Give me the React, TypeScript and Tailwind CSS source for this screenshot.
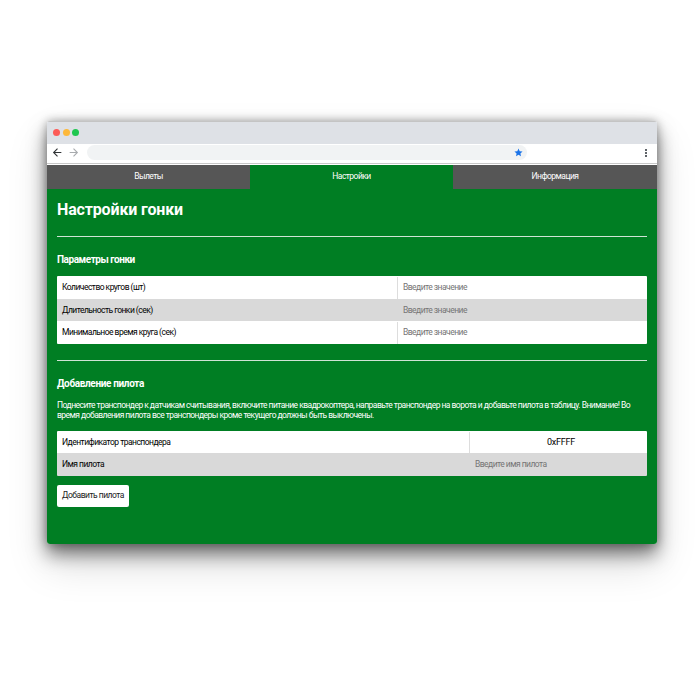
const font = { fontFamily: 'Roboto, "Liberation Sans", sans-serif' };

function Row({ label, value, gray, split, center }: { label: string; value: string; gray?: boolean; split: string; center?: boolean }) {
  return (
    <div className={`flex h-[22.5px] items-center pt-px text-[8.5px] tracking-[-0.53px] ${gray ? 'bg-[#d9d9d9]' : 'bg-white'}`}>
      <div className={`${split} pl-[5px] text-black`}>{label}</div>
      <div className={`flex h-full flex-1 items-center border-l pl-[5px] ${gray ? 'border-transparent' : 'border-[#dddddd]'} ${center ? 'justify-center pl-0 text-[9px] tracking-[-0.2px] text-black' : 'text-[#757575]'}`}>
        {value}
      </div>
    </div>
  );
}

export default function App() {
  return (
    <div className="h-[700px] w-[700px] overflow-hidden bg-white pl-[47px] pt-[121px] antialiased" style={font}>
      <div className="h-[423px] w-[610px] overflow-hidden rounded-[3px] shadow-[0_10px_18px_rgba(0,0,0,0.5),0_0_10px_rgba(0,0,0,0.3),0_20px_40px_rgba(0,0,0,0.15)]">
        <div className="flex h-[22.5px] items-center gap-[2.5px] border-t border-[#c4c4c4] bg-[#dee1e6] pl-[6px]">
          <span className="h-[7px] w-[7px] rounded-full bg-[#fc5b57]" />
          <span className="h-[7px] w-[7px] rounded-full bg-[#fdb83a]" />
          <span className="h-[7px] w-[7px] rounded-full bg-[#1fc750]" />
        </div>
        <div className="flex h-[20px] items-center border-b border-[#c8c8c8] bg-white pb-px">
          <svg width="11" height="11" viewBox="0 0 10 10" fill="none" stroke="#2f3235" strokeWidth="1" className="ml-[5px]">
            <path d="M8.5 5H1.5M5 1.5L1.5 5L5 8.5" />
          </svg>
          <svg width="11" height="11" viewBox="0 0 10 10" fill="none" stroke="#a8abae" strokeWidth="1" className="ml-[5px]">
            <path d="M1.5 5H8.5M5 1.5L8.5 5L5 8.5" />
          </svg>
          <div className="ml-[8px] flex h-[15px] w-[440px] items-center justify-end rounded-full bg-[#f1f3f4] pr-[4px]">
            <svg width="9" height="9" viewBox="0 0 24 24" fill="#1a73e8">
              <path d="M12 1.5l3.2 7 7.6.8-5.7 5.1 1.6 7.5L12 18l-6.7 3.9 1.6-7.5L1.2 9.3l7.6-.8z" />
            </svg>
          </div>
          <div className="ml-auto mr-[10px] flex flex-col gap-[1px]">
            <span className="h-[2px] w-[2px] bg-[#5f6368]" />
            <span className="h-[2px] w-[2px] bg-[#5f6368]" />
            <span className="h-[2px] w-[2px] bg-[#5f6368]" />
          </div>
        </div>
        <div className="flex h-[25.5px] pt-px text-[8.5px] tracking-[-0.55px] text-white">
          <div className="flex w-[203px] items-center justify-center bg-[#565656]">Вылеты</div>
          <div className="flex w-[203px] items-center justify-center bg-[#007e23]">Настройки</div>
          <div className="flex flex-1 items-center justify-center bg-[#565656]">Информация</div>
        </div>
        <div className="h-[355px] bg-[#007e23] px-[10px] text-white">
          <h1 className="pt-[10px] text-[16px] font-bold leading-[22px] tracking-[-0.15px]">Настройки гонки</h1>
          <div className="mt-[15px] h-px bg-[#cfe3d4]" />
          <h2 className="mt-[17px] text-[10px] font-bold leading-[12px] tracking-[-0.45px]">Параметры гонки</h2>
          <div className="mt-[10px] overflow-hidden rounded-[1px]">
            <Row label="Количество кругов (шт)" value="Введите значение" split="w-[340px]" />
            <Row label="Длительность гонки (сек)" value="Введите значение" split="w-[340px]" gray />
            <Row label="Минимальное время круга (сек)" value="Введите значение" split="w-[340px]" />
          </div>
          <div className="mt-[16px] h-px bg-[#cfe3d4]" />
          <h2 className="mt-[17px] text-[10px] font-bold leading-[12px] tracking-[-0.35px]">Добавление пилота</h2>
          <p className="mt-[10px] text-[8.5px] leading-[10.5px] tracking-[-0.53px]">
            Поднесите транспондер к датчикам считывания, включите питание квадрокоптера, направьте транспондер на ворота и добавьте пилота в таблицу. Внимание! Во время добавления пилота все транспондеры кроме текущего должны быть выключены.
          </p>
          <div className="mt-[10px] overflow-hidden rounded-[1px]">
            <Row label="Идентификатор транспондера" value="0xFFFF" split="w-[412px]" center />
            <Row label="Имя пилота" value="Введите имя пилота" split="w-[412px]" gray />
          </div>
          <button className="mt-[9px] flex h-[22px] w-[72px] items-center justify-center rounded-[2px] bg-white text-[8.5px] tracking-[-0.5px] text-[#222222]">
            Добавить пилота
          </button>
        </div>
      </div>
    </div>
  );
}
